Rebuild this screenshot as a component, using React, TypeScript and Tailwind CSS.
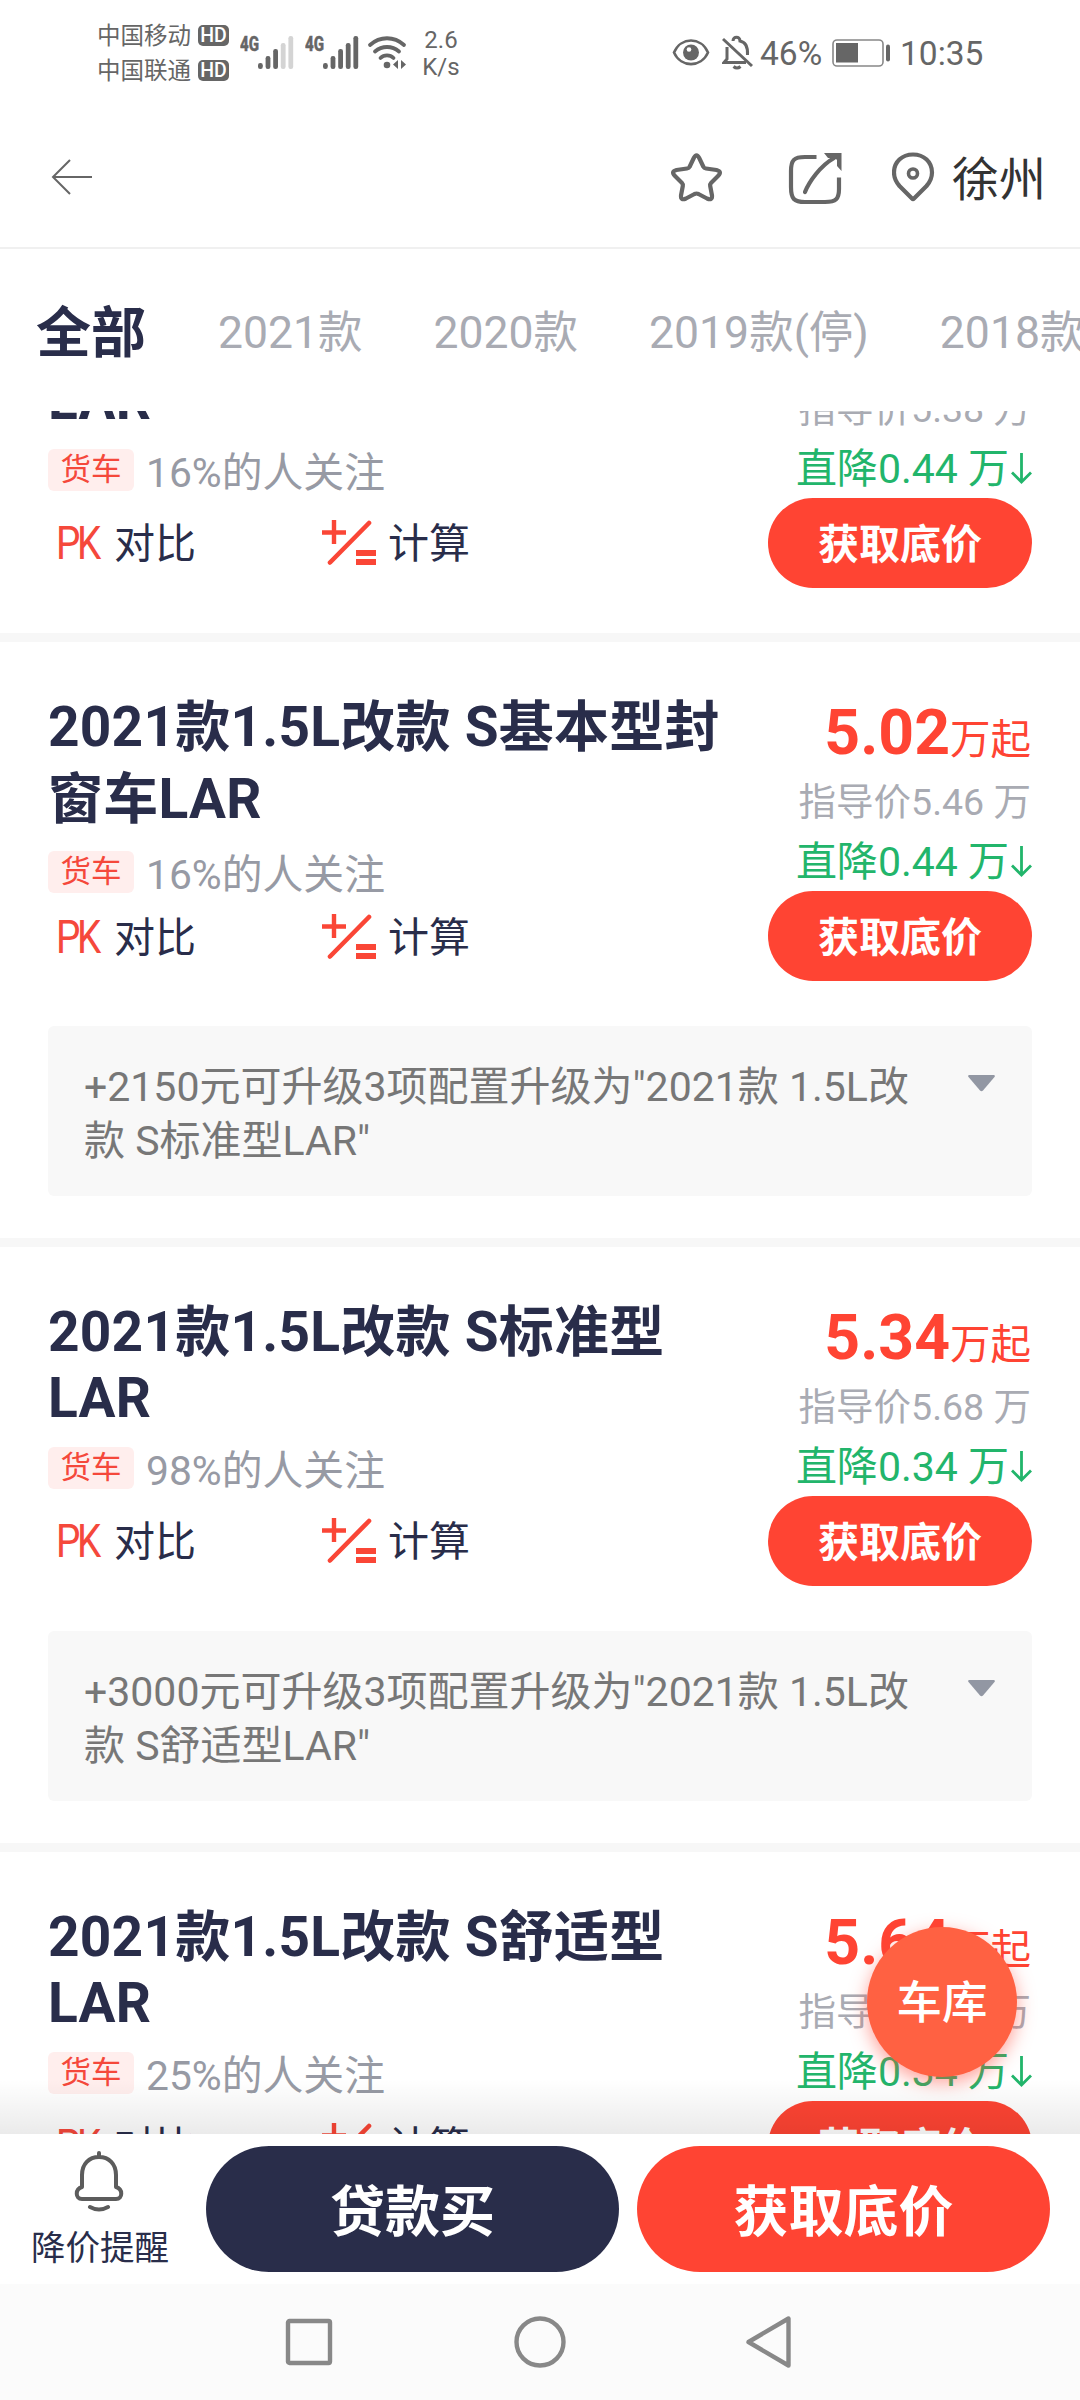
import React from "react";

interface Car {
  id: number;
  title: string[];
  price?: string;
  guide: string;
  drop: string;
  follow: string;
  upgrade?: string[];
  tall?: boolean;
}

const tabs = ["2021款", "2020款", "2019款(停)", "2018款"];

const cars: Car[] = [
  { id: 1, title: ["", "LAR"], guide: "5.38", drop: "0.44", follow: "16%" },
  {
    id: 2,
    title: ["2021款1.5L改款 S基本型封", "窗车LAR"],
    price: "5.02",
    guide: "5.46",
    drop: "0.44",
    follow: "16%",
    upgrade: ["+2150元可升级3项配置升级为\"2021款 1.5L改", "款 S标准型LAR\""],
    tall: true,
  },
  {
    id: 3,
    title: ["2021款1.5L改款 S标准型", "LAR"],
    price: "5.34",
    guide: "5.68",
    drop: "0.34",
    follow: "98%",
    upgrade: ["+3000元可升级3项配置升级为\"2021款 1.5L改", "款 S舒适型LAR\""],
  },
  { id: 4, title: ["2021款1.5L改款 S舒适型", "LAR"], price: "5.64", guide: "5.98", drop: "0.34", follow: "25%" },
];

const Signal: React.FC<{ level: number }> = ({ level }) => (
  <svg width="54" height="36" viewBox="0 0 54 36">
    <text x="0" y="16" fontSize="21" fontWeight="800" fill="#666" stroke="#666" strokeWidth="0.500" textLength="19" lengthAdjust="spacingAndGlyphs">4G</text>
    {[6, 13, 20, 26, 33].map((h, i) => (
      <rect key={h} x={18 + i * 7.6} y={34 - h} width="4.8" height={h} rx="2.2" fill={i < level ? "#666" : "#d4d4d4"} />
    ))}
  </svg>
);

const Carrier: React.FC<{ name: string }> = ({ name }) => (
  <div className="flex h-[35px] items-center">
    <span className="w-[101px] text-[23.5px] leading-[28px]">{name}</span>
    <span className="flex h-[21px] w-[31px] items-center justify-center rounded-[5px] bg-[#666] text-[19.5px] font-medium leading-none text-white">HD</span>
  </div>
);

const StatusBar = () => (
  <div className="flex h-[102px] items-start pl-[97px] text-[#666]">
    <div className="mt-[18px] w-[143px]">
      <Carrier name="中国移动" />
      <Carrier name="中国联通" />
    </div>
    <div className="mt-[35px] flex gap-[11px]">
      <Signal level={3} />
      <Signal level={5} />
    </div>
    <svg className="ml-[8px] mt-[34px]" width="42" height="36" viewBox="0 0 42 36" fill="none" stroke="#666" strokeWidth="3.8" strokeLinecap="round">
      <path d="M3 11C13 2 27 2 37 11" />
      <path d="M8 17.500C15 11.500 25 11.500 32 17.500" />
      <path d="M13.500 24C17 20.500 23 20.500 26.500 24" />
      <circle cx="20" cy="31" r="3.300" fill="#666" stroke="none" />
      <path d="M31 26v9l-5-4.500zM34 26v9l5-4.500z" fill="#666" stroke="none" />
    </svg>
    <div className="ml-[12px] mt-[27px] w-[40px] text-center text-[24px] leading-[27px]">
      <div>2.6</div>
      <div>K/s</div>
    </div>
    <svg className="ml-[211px] mt-[38px]" width="38" height="29" viewBox="0 0 38 29">
      <path d="M2 14.500C9 -1.500 29 -1.500 36 14.500C29 30 9 30 2 14.500Z" fill="none" stroke="#666" strokeWidth="2.600" />
      <circle cx="19" cy="14.500" r="8" fill="#666" />
      <circle cx="17" cy="11.500" r="2.300" fill="#fff" />
    </svg>
    <svg className="ml-[12px] mt-[35px]" width="31" height="35" viewBox="0 0 31 35" fill="none" stroke="#666" strokeWidth="3">
      <path d="M1 4L30 31" />
      <path d="M5 12V24L2 27.500H24" />
      <path d="M11 6C11 1 18 1 18 6C23 7 26 12 25.500 20" />
      <path d="M11.500 31.500Q15 34.500 18.500 31.500" />
    </svg>
    <span className="ml-[7px] mt-[36px] w-[71px] text-[33.5px] leading-[36px]">46%</span>
    <svg className="ml-px mt-[38px]" width="59" height="29" viewBox="0 0 59 29">
      <rect x="1" y="2" width="50" height="26" rx="4" fill="none" stroke="#888" strokeWidth="1.600" />
      <rect x="4" y="5" width="22" height="19.500" fill="#666" />
      <rect x="54" y="6.500" width="4" height="17" rx="2" fill="#666" />
    </svg>
    <span className="ml-[9px] mt-[36px] text-[33.5px] leading-[36px]">10:35</span>
  </div>
);

const Header = () => (
  <div className="flex h-[147px] items-start border-b-2 border-[#f0f0f0] pt-[48px]">
    <svg className="ml-[50px] mt-[8px]" width="44" height="38" viewBox="0 0 44 38" fill="none" stroke="#666" strokeWidth="2">
      <path d="M20 2L3 19L20 36M3 19H42" />
    </svg>
    <svg className="ml-[576px]" width="54" height="54" viewBox="0 0 54 54" fill="none" stroke="#666" strokeWidth="4.200" strokeLinejoin="round">
      <path d="M23.800 8Q26.500 2.500 29.200 8L33.500 17Q34 18.200 36 18.500L46.500 20Q52.500 21.500 48 26L41 33Q40 34 40.200 36L42 45.500Q42.500 51 37 48.500L28.500 44Q26.500 43 24.500 44L16 48.500Q10.500 51 11 45.500L12.800 36Q13 34 12 33L5 26Q0.500 21.500 6.500 20L17 18.500Q19 18.200 19.500 17Z" />
    </svg>
    <svg className="ml-[63px] mt-px" width="56" height="56" viewBox="0 0 56 56" fill="none" stroke="#666" strokeWidth="4.200">
      <path d="M29.500 6H18C7 6 4 9 4 20V36C4 48 7 51 18 51H38C49 51 52 48 52 38V26.500" />
      <path d="M18 41C22 31 33 15 47 7" strokeLinecap="round" />
      <path d="M37 2H54.500V20L50 15V9L48 7H41Z" fill="#666" stroke="none" />
    </svg>
    <svg className="ml-[49px]" width="44" height="54" viewBox="0 0 44 54" fill="none" stroke="#666" strokeWidth="4.200" strokeLinejoin="round">
      <path d="M20 48.500L7.500 36C4 32 2 28 2 22.500C2 12 10 4.500 21 4.500S40 12 40 22.500C40 28 38 32 34.500 36L22 48.500Q21 49.500 20 48.500Z" />
      <circle cx="21" cy="23.500" r="4.500" strokeWidth="3.600" />
    </svg>
    <span className="ml-[16px] mt-[5px] text-[47px] leading-[50px] text-[#333]">徐州</span>
  </div>
);

const Tabs = () => (
  <div className="flex h-[162px] items-center overflow-hidden whitespace-nowrap pl-[36px] pt-[6px]">
    <span className="w-[182px] shrink-0 text-[55px] font-bold leading-none text-[#292d4a]">全部</span>
    <div className="flex shrink-0 gap-[71px] text-[44.5px] leading-none text-[#a9abb3]">
      {tabs.map((t) => (
        <span key={t}>{t}</span>
      ))}
    </div>
  </div>
);

const CarCard: React.FC<{ car: Car }> = ({ car }) => (
  <div className="border-b-[9px] border-[#f7f7f7] px-[48px]">
    <div className="flex h-[339px] justify-between">
      <div className="flex flex-col justify-between">
        <div className="pt-[49px]">
          <div className="whitespace-nowrap text-[55px] font-bold leading-[72px] tracking-[0.25px] text-[#292d4a]">
            <div className="h-[72px]">{car.title[0]}</div>
            <div className={car.tall ? "" : "leading-[60px]"}>{car.title[1]}</div>
          </div>
          <div className={`flex h-[42px] items-center ${car.tall ? "mt-[16px]" : "mt-[19px]"}`}>
            <span className="flex h-[42px] w-[86px] items-center justify-center rounded-[6px] bg-[#ffeeed] text-[30.5px] leading-none text-[#f5483b]">货车</span>
            <span className="ml-[12px] mt-[7px] text-[40.8px] leading-none text-[#979aa4]">{car.follow}的人关注</span>
          </div>
        </div>
        <div className="flex h-[90px] items-center text-[41px] leading-none text-[#292d4a]">
          <span className="ml-[8px] inline-block w-[58px] origin-left scale-x-[0.84] whitespace-nowrap text-[46px] tracking-[-4px] text-[#f5483b]">PK</span>
          <span className="mt-[3px] w-[208px]">对比</span>
          <svg width="56" height="46" viewBox="0 0 56 46">
            <path d="M0 12.500H24M12 0V24" stroke="#fa4636" strokeWidth="4.400" />
            <path d="M8 42.500L47 3" stroke="#fa4636" strokeWidth="4.600" strokeLinecap="round" />
            <path d="M34 33H54M34 42H54" stroke="#fa4636" strokeWidth="5.800" />
          </svg>
          <span className="ml-[10px] mt-[3px]">计算</span>
        </div>
      </div>
      <div className="flex w-[264px] flex-col items-end whitespace-nowrap pt-[50px]">
        <div className="h-[80px] pr-px text-[62.5px] font-bold leading-[81px] text-[#ff4433]">
          {car.price && (
            <>
              {car.price}
              <span className="text-[40.5px] font-normal leading-none">万起</span>
            </>
          )}
        </div>
        <div className="pr-px text-[37.5px] leading-[60px] text-[#a9abb3]">指导价{car.guide} 万</div>
        <div className="flex h-[59px] items-center pt-[2px] text-[41px] leading-[59px] text-[#22b56b]">
          <span>直降{car.drop} 万</span>
          <svg className="-mr-px ml-px" width="23" height="34" viewBox="0 0 23 34" fill="none" stroke="#22b56b" strokeWidth="2.800">
            <path d="M11.500 0V29M2 19.500L11.500 29L21 19.500" />
          </svg>
        </div>
        <button className="h-[90px] w-[264px] shrink-0 rounded-full bg-[#ff4433] pt-[5px] text-[41px] font-bold leading-none text-white">获取底价</button>
      </div>
    </div>
    {car.upgrade ? (
      <div className="mb-[42px] mt-[45px] flex h-[170px] items-start rounded-[6px] bg-[#f8f8f8] pl-[36px] pt-[34px]">
        <div className="w-[884px] whitespace-nowrap text-[41px] leading-[54px] text-[#777]">
          {car.upgrade.map((line) => (
            <div key={line}>{line}</div>
          ))}
        </div>
        <svg className="mt-[15px]" width="27" height="17" viewBox="0 0 27 17">
          <path d="M1 0H26Q27.500 0.500 26.500 2L15 15.500Q13.500 17 12 15.500L0.500 2Q-0.500 0.500 1 0Z" fill="#9297a3" />
        </svg>
      </div>
    ) : (
      <div className="h-[45px]" />
    )}
  </div>
);

const BottomBar = () => (
  <div className="flex h-[150px] shrink-0 items-start bg-white pt-[12px]">
    <div className="flex w-[206px] flex-col items-center pr-[6px] pt-[5px]">
      <svg className="-ml-px" width="52" height="62" viewBox="0 0 52 62" fill="none" stroke="#5c5c5c" strokeWidth="4" strokeLinecap="round">
        <path d="M25 2V6M8 36V24C8 13 15 6 25 6S42 13 42 24V36C49 38 49 48 42 48H8C1 48 1 38 8 36Z" strokeLinejoin="round" />
        <path d="M16 56Q25 61 34 56" />
      </svg>
      <span className="mt-[12px] text-[34.5px] leading-[46px] text-[#292d4a]">降价提醒</span>
    </div>
    <button className="h-[126px] w-[413px] rounded-full bg-[#292d4a] pt-[7px] text-[55px] font-bold leading-none text-white">贷款买</button>
    <button className="ml-[18px] h-[126px] w-[413px] rounded-full bg-[#ff4433] pt-[7px] text-[55px] font-bold leading-none text-white">获取底价</button>
  </div>
);

const NavBar = () => (
  <div className="flex h-[116px] shrink-0 items-center bg-[#fbfbfb] pl-[285px]">
    <svg width="506" height="54" viewBox="0 0 506 54" fill="none" stroke="#888" strokeWidth="4.400" strokeLinejoin="round">
      <rect x="3" y="6" width="42" height="42" rx="1.500" />
      <circle cx="255" cy="27" r="23.500" />
      <path d="M463.500 27L503.500 3.500V50.500Z" />
    </svg>
  </div>
);

const App: React.FC = () => {
  return (
    <div className="relative flex h-[2400px] w-[1080px] flex-col overflow-hidden bg-white font-['Roboto','Noto_Sans_CJK_SC',sans-serif]">
      <StatusBar />
      <Header />
      <Tabs />
      <div className="relative h-[1723px] shrink-0 overflow-hidden">
        <div className="-mt-[162px]">
          {cars.map((car) => (
            <CarCard key={car.id} car={car} />
          ))}
        </div>
        {/* Ombre au-dessus de la barre du bas */}
        <div className="absolute inset-x-0 bottom-0 h-[54px] bg-gradient-to-b from-transparent to-black/8" />
      </div>
      <BottomBar />
      <NavBar />
      {/* Bouton flottant */}
      <button className="absolute left-[867px] top-[1927px] h-[150px] w-[150px] rounded-full bg-[#ff6142] pt-[4px] text-[45.5px] font-medium leading-none text-white shadow-[0_6px_18px_rgba(255,68,51,0.5)]">
        车库
      </button>
    </div>
  );
};

export default App;
